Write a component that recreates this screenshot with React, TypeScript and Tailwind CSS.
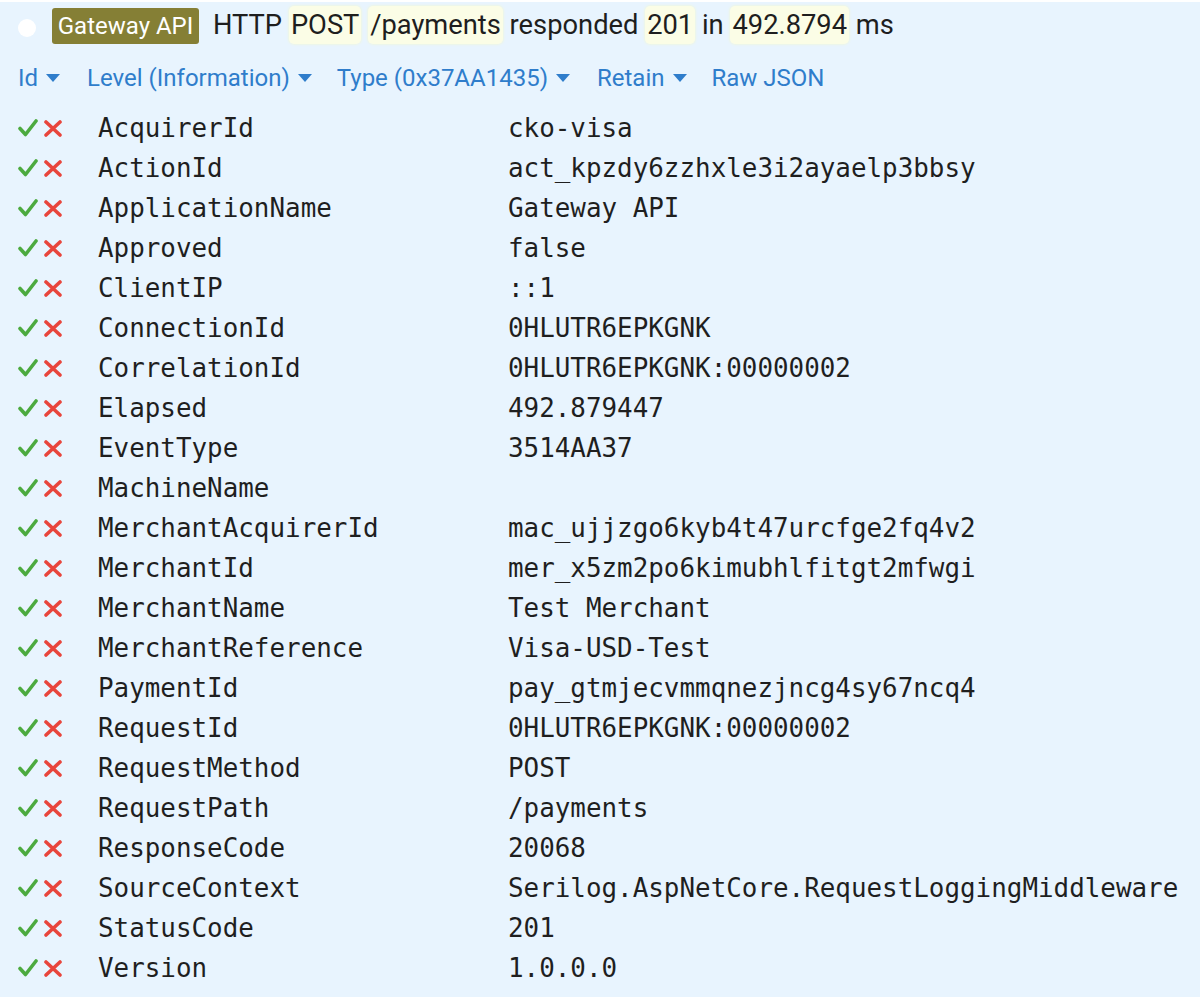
import React from 'react';

const rows: [string, string][] = [
  ['AcquirerId', 'cko-visa'],
  ['ActionId', 'act_kpzdy6zzhxle3i2ayaelp3bbsy'],
  ['ApplicationName', 'Gateway API'],
  ['Approved', 'false'],
  ['ClientIP', '::1'],
  ['ConnectionId', '0HLUTR6EPKGNK'],
  ['CorrelationId', '0HLUTR6EPKGNK:00000002'],
  ['Elapsed', '492.879447'],
  ['EventType', '3514AA37'],
  ['MachineName', ''],
  ['MerchantAcquirerId', 'mac_ujjzgo6kyb4t47urcfge2fq4v2'],
  ['MerchantId', 'mer_x5zm2po6kimubhlfitgt2mfwgi'],
  ['MerchantName', 'Test Merchant'],
  ['MerchantReference', 'Visa-USD-Test'],
  ['PaymentId', 'pay_gtmjecvmmqnezjncg4sy67ncq4'],
  ['RequestId', '0HLUTR6EPKGNK:00000002'],
  ['RequestMethod', 'POST'],
  ['RequestPath', '/payments'],
  ['ResponseCode', '20068'],
  ['SourceContext', 'Serilog.AspNetCore.RequestLoggingMiddleware'],
  ['StatusCode', '201'],
  ['Version', '1.0.0.0'],
];

// 消息模板中的参数高亮
const Token: React.FC<{ children: React.ReactNode }> = ({ children }) => (
  <span className="bg-[#fbfde6] rounded-[5px] px-[2px] py-[3px] shadow-[0_0_3px_#f4f8c8]">{children}</span>
);

const Caret = () => (
  <svg width="14" height="8" viewBox="0 0 14 8" className="ml-[8px] inline-block">
    <path d="M0 0 L14 0 L7 8 Z" fill="#2f7dcb" />
  </svg>
);

const Check = () => (
  <svg width="20" height="18" viewBox="0 0 20 18">
    <path d="M2 9.5 L7.5 15.5 L18 2" fill="none" stroke="#4caa3f" strokeWidth="3.6" strokeLinecap="round" strokeLinejoin="round" />
  </svg>
);

const Cross = () => (
  <svg width="20" height="17" viewBox="0 0 20 17">
    <path d="M3 2 L17 15 M17 2 L3 15" fill="none" stroke="#e8453c" strokeWidth="3.6" strokeLinecap="round" />
  </svg>
);

const App: React.FC = () => {
  return (
    <div className="w-[1200px] h-[1002px] bg-white pt-[2px]">
      <div className="h-[995px] bg-[#e8f4fe]">
        {/* 标题行 */}
        <div className="flex items-center h-[46px] pl-[18px] pt-[2px]" style={{ fontFamily: 'Roboto, "Liberation Sans", sans-serif' }}>
          <div className="w-[18px] h-[18px] rounded-full bg-white mt-[4px]" />
          <div className="ml-[16px] h-[36px] w-[147px] rounded-[3px] bg-[#857f35] text-white text-[24px] flex items-center justify-center">
            Gateway API
          </div>
          <div className="ml-[14px] text-[27.3px] text-[#1e1e1e] leading-none whitespace-pre">
            HTTP <Token>POST</Token> <Token>/payments</Token> responded <Token>201</Token> in <Token>492.8794</Token> ms
          </div>
        </div>

        {/* 操作链接 */}
        <div
          className="flex items-center h-[60px] pl-[18px] text-[24px] text-[#2f7dcb]"
          style={{ fontFamily: 'Roboto, "Liberation Sans", sans-serif' }}
        >
          <span className="flex items-center">Id<Caret /></span>
          <span className="flex items-center ml-[27px]">Level (Information)<Caret /></span>
          <span className="flex items-center ml-[25px]">Type (0x37AA1435)<Caret /></span>
          <span className="flex items-center ml-[27px]">Retain<Caret /></span>
          <span className="ml-[25px]">Raw JSON</span>
        </div>

        {/* 属性列表 */}
        <div className="pl-[18px]" style={{ fontFamily: '"DejaVu Sans Mono", "Liberation Mono", monospace' }}>
          {rows.map(([k, v]) => (
            <div key={k} className="flex items-center h-[40px] text-[25.9px] text-[#1f1f1f]">
              <div className="w-[80px] flex items-center">
                <Check />
                <span className="ml-[5px] flex"><Cross /></span>
              </div>
              <div className="w-[410px] whitespace-pre">{k}</div>
              <div className="whitespace-pre">{v}</div>
            </div>
          ))}
        </div>
      </div>
    </div>
  );
};

export default App;
